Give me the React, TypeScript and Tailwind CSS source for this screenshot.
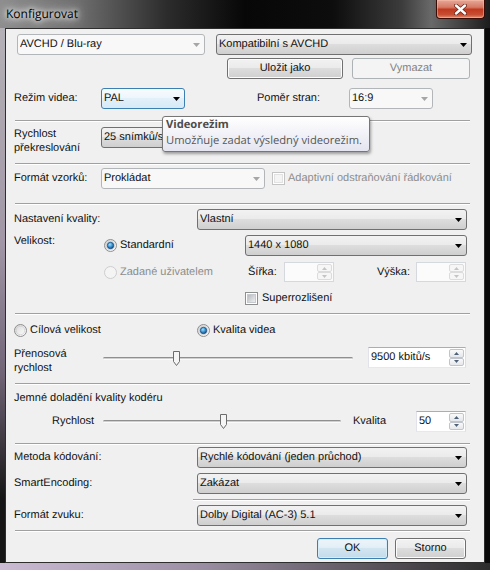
import type { ReactNode } from 'react'

type Kind = 'normal' | 'disabled' | 'focus'

const comboSkin: Record<Kind, string> = {
  normal: 'border-[#707070] bg-[linear-gradient(#f2f2f2_0%,#ebebeb_45%,#dddddd_50%,#cfcfcf_100%)]',
  disabled: 'border-[#b3b6b9] bg-[#f8f8f8]',
  focus: 'border-[#3c7fb1] bg-[linear-gradient(#f7fbfe_0%,#eef6fc_45%,#e2f0fa_50%,#d5eaf7_100%)]',
}

function Combo({ className = '', text, kind = 'normal' }: { className?: string; text: string; kind?: Kind }) {
  return (
    <div className={`flex h-[21px] shrink-0 items-center rounded-[3px] border pl-[2px] pr-[4px] ${comboSkin[kind]} ${className}`}>
      <span className="flex-1 truncate whitespace-nowrap">{text}</span>
      <svg width="7" height="4" viewBox="0 0 7 4" className="shrink-0">
        <path d="M0 0h7L3.5 4z" fill={kind === 'disabled' ? '#a6a6a6' : '#000'} />
      </svg>
    </div>
  )
}

function Button({ className = '', children, kind = 'normal' }: { className?: string; children: ReactNode; kind?: 'normal' | 'disabled' | 'default' }) {
  const skin =
    kind === 'disabled'
      ? 'border-[#adb2b5] bg-[#f4f4f4] text-[#838383]'
      : kind === 'default'
        ? 'border-[#3c7fb1] bg-[linear-gradient(#edf5fa_0%,#e2eef6_45%,#d2e5f0_50%,#c3dbea_100%)] shadow-[inset_0_0_0_1px_#d6ecf8]'
        : 'border-[#707070] bg-[linear-gradient(#f2f2f2_0%,#ebebeb_45%,#dddddd_50%,#cfcfcf_100%)] shadow-[inset_0_0_0_1px_#fcfcfc]'
  return (
    <div className={`flex h-[21px] shrink-0 items-center justify-center rounded-[3px] border ${skin} ${className}`}>
      {children}
    </div>
  )
}

function Sep({ className = '' }: { className?: string }) {
  return <div className={`h-[2px] shrink-0 border-t border-b border-t-[#a0a0a0] border-b-white ${className}`} />
}

function Radio({ checked = false, disabled = false }: { checked?: boolean; disabled?: boolean }) {
  return (
    <svg width="13" height="13" viewBox="0 0 13 13" className="shrink-0">
      <defs>
        <linearGradient id="rb-ring" x1="0" y1="0" x2="1" y2="1">
          <stop offset="0" stopColor="#d2d2d2" />
          <stop offset="1" stopColor="#ffffff" />
        </linearGradient>
        <linearGradient id="rb-in" x1="0" y1="0" x2="1" y2="1">
          <stop offset="0" stopColor="#dedede" />
          <stop offset="1" stopColor="#fafafa" />
        </linearGradient>
        <radialGradient id="rb-dot" cx="0.4" cy="0.35" r="0.7">
          <stop offset="0" stopColor="#a6e0fd" />
          <stop offset="0.5" stopColor="#3d98d6" />
          <stop offset="1" stopColor="#11457a" />
        </radialGradient>
      </defs>
      <circle cx="6.5" cy="6.5" r="6" fill={disabled ? '#f4f4f4' : 'url(#rb-ring)'} stroke={disabled ? '#cdcdcd' : '#8e8f8f'} />
      {!disabled && <circle cx="6.5" cy="6.5" r="4.2" fill="url(#rb-in)" stroke="#c9c9c9" strokeWidth="0.6" />}
      {checked && <circle cx="6.5" cy="6.5" r="3.2" fill="url(#rb-dot)" stroke="#164d84" strokeWidth="0.8" />}
    </svg>
  )
}

function Check({ disabled = false }: { disabled?: boolean }) {
  return (
    <svg width="13" height="13" viewBox="0 0 13 13" className="shrink-0">
      <defs>
        <linearGradient id="cb-in" x1="0" y1="0" x2="1" y2="1">
          <stop offset="0" stopColor="#b4b8be" />
          <stop offset="1" stopColor="#f1f1f1" />
        </linearGradient>
      </defs>
      <rect x="0.5" y="0.5" width="12" height="12" fill="#fff" stroke={disabled ? '#c4c4c4' : '#8e8f8f'} />
      <rect x="2.5" y="2.5" width="8" height="8" fill={disabled ? '#f4f4f4' : 'url(#cb-in)'} stroke={disabled ? '#e2e2e2' : '#c6c9ce'} />
    </svg>
  )
}

function SpinHalf({ up = false, disabled = false }: { up?: boolean; disabled?: boolean }) {
  return (
    <div
      className={`flex flex-1 items-center justify-center rounded-[2px] border ${
        disabled ? 'border-[#dcdcdc] bg-[#f6f6f6]' : 'border-[#c0c5cc] bg-[linear-gradient(#fafafa,#e5e7ea)]'
      }`}
    >
      <svg width="5" height="3" viewBox="0 0 5 3">
        <path d={up ? 'M0 3h5L2.5 0z' : 'M0 0h5L2.5 3z'} fill={disabled ? '#c4c4c4' : '#4f6178'} />
      </svg>
    </div>
  )
}

function Spin({ className = '', value = '', disabled = false }: { className?: string; value?: string; disabled?: boolean }) {
  return (
    <div
      className={`flex shrink-0 items-stretch border p-[1px] ${
        disabled ? 'border-[#d5d8dc] bg-[#fbfbfb]' : 'border-[#abadb3] border-b-[#e3e9ef] border-l-[#e2e3ea] border-r-[#dbdfe6] bg-white'
      } ${className}`}
    >
      <span className="flex-1 self-center pl-[1px]">{value}</span>
      <div className="flex w-[15px] flex-col">
        <SpinHalf up disabled={disabled} />
        <SpinHalf disabled={disabled} />
      </div>
    </div>
  )
}

function Slider({ className = '', thumb = '' }: { className?: string; thumb?: string }) {
  return (
    <div className={`relative h-[15px] shrink-0 ${className}`}>
      <div className="mx-[1px] mt-[6px] h-[3px] rounded-[2px] border-t border-b border-t-[#8f8f8f] border-b-[#fafafa] bg-[#cfcfcf]" />
      <svg width="7" height="15" viewBox="0 0 7 15" className={`absolute top-0 ${thumb}`}>
        <path d="M0.5 0.5H6.5V10.5L3.5 14.5L0.5 10.5Z" fill="#f5f5f5" stroke="#6c6c6c" />
      </svg>
    </div>
  )
}

function CloseButton() {
  return (
    <div className="ml-auto mr-[5px] flex h-[19px] w-[49px] items-center justify-center rounded-b-[4px] border border-t-0 border-[#3a0c06] bg-[linear-gradient(#e7a797_0%,#d57a66_40%,#c2391f_52%,#c84e33_82%,#e29071_100%)] shadow-[inset_0_0_0_1px_rgba(255,200,180,0.45)]">
      <svg width="13" height="11" viewBox="0 0 13 11">
        <path d="M2 1.5L11 9.5M11 1.5L2 9.5" stroke="#6b2519" strokeWidth="4" strokeLinecap="round" />
        <path d="M2 1.5L11 9.5M11 1.5L2 9.5" stroke="#ffffff" strokeWidth="2.4" strokeLinecap="round" />
      </svg>
    </div>
  )
}

export default function App() {
  return (
    <div className="flex h-[570px] w-[490px] flex-col overflow-hidden bg-[#0c0c0c] font-['Liberation_Sans',Arial,sans-serif] text-[11px] leading-[13px] text-[#111] antialiased [text-rendering:geometricPrecision]">
      {/* title bar */}
      <div className="flex h-[28px] shrink-0 items-start bg-[linear-gradient(90deg,#8e8e8e_0%,#6e6e6e_16%,#2c2c2c_34%,#070707_50%,#0d0d0d_68%,#3c3c3c_82%,#696969_88%,#1c1c1c_100%)]">
        <span className="ml-[6px] mt-[6px] font-['Open_Sans',sans-serif] text-[12px] leading-[16px] text-black [text-shadow:0_0_5px_#fff,0_0_9px_#fff,0_0_14px_#fff]">
          Konfigurovat
        </span>
        <CloseButton />
      </div>

      <div className="flex h-[535px] shrink-0">
        <div className="w-[5px] shrink-0 bg-[linear-gradient(#b4b1b6,#a197a6_40%,#6f6375_65%,#151515_88%)]" />

        {/* client area */}
        <div className="relative flex w-[480px] shrink-0 flex-col border border-[#2e2e2e] bg-[#f0f0f0]">
          <div className="mt-[5px] flex h-[21px]">
            <Combo className="ml-[11px] w-[188px]" text="AVCHD / Blu-ray" kind="disabled" />
            <Combo className="ml-[11px] w-[256px]" text="Kompatibilní s AVCHD" />
          </div>

          <div className="mt-[3px] flex h-[21px]">
            <Button className="ml-[221px] w-[116px]">Uložit jako</Button>
            <Button className="ml-[9px] w-[118px]" kind="disabled">
              Vymazat
            </Button>
          </div>

          <div className="mt-[9px] flex h-[21px] items-center">
            <span className="ml-[8px] w-[87px] shrink-0">Režim videa:</span>
            <Combo className="w-[84px]" text="PAL" kind="focus" />
            <span className="ml-[72px] w-[92px] shrink-0">Poměr stran:</span>
            <Combo className="w-[84px]" text="16:9" kind="disabled" />
          </div>

          <Sep className="ml-[9px] mt-[11px] w-[455px]" />

          <div className="mt-[5px] flex h-[28px] items-start">
            <span className="ml-[8px] w-[87px] shrink-0 leading-[14px]">
              Rychlost
              <br />
              překreslování
            </span>
            <Combo className="w-[84px]" text="25 snímků/s" />
          </div>

          <Sep className="ml-[9px] mt-[8px] w-[455px]" />

          <div className="mt-[3px] flex h-[21px] items-center">
            <span className="ml-[8px] w-[87px] shrink-0">Formát vzorků:</span>
            <Combo className="w-[164px]" text="Prokládat" kind="disabled" />
            <span className="ml-[7px] flex">
              <Check disabled />
            </span>
            <span className="ml-[3px] text-[#8d8d8d]">Adaptivní odstraňování řádkování</span>
          </div>

          <Sep className="ml-[9px] mt-[14px] w-[455px]" />

          <div className="mt-[4px] flex h-[21px] items-center">
            <span className="ml-[8px] w-[183px] shrink-0">Nastavení kvality:</span>
            <Combo className="w-[270px]" text="Vlastní" />
          </div>

          <div className="mt-[5px] flex h-[21px] items-center">
            <span className="ml-[8px] w-[90px] shrink-0 self-start">Velikost:</span>
            <div className="flex w-[141px] shrink-0 items-center">
              <Radio checked />
              <span className="ml-[3px]">Standardní</span>
            </div>
            <Combo className="w-[222px]" text="1440 x 1080" />
          </div>

          <div className="mt-[6px] flex h-[20px] items-center">
            <div className="ml-[98px] flex w-[141px] shrink-0 items-center">
              <Radio disabled />
              <span className="ml-[3px] text-[#8d8d8d]">Zadané uživatelem</span>
            </div>
            <span className="ml-[3px] w-[36px] shrink-0">Šířka:</span>
            <Spin className="h-[20px] w-[50px]" disabled />
            <span className="ml-[43px] w-[39px] shrink-0">Výška:</span>
            <Spin className="h-[20px] w-[50px]" disabled />
          </div>

          <div className="mt-[9px] flex h-[14px] items-center">
            <span className="ml-[239px] flex">
              <Check />
            </span>
            <span className="ml-[4px]">Superrozlišení</span>
          </div>

          <Sep className="ml-[9px] mt-[8px] w-[455px]" />

          <div className="mt-[8px] flex h-[14px] items-center">
            <div className="ml-[8px] flex w-[183px] shrink-0 items-center">
              <Radio />
              <span className="ml-[3px]">Cílová velikost</span>
            </div>
            <Radio checked />
            <span className="ml-[3px]">Kvalita videa</span>
          </div>

          <div className="mt-[10px] flex h-[28px] items-start">
            <span className="ml-[8px] w-[88px] shrink-0 leading-[14px]">
              Přenosová
              <br />
              rychlost
            </span>
            <Slider className="mt-[4px] w-[252px]" thumb="left-[71px]" />
            <Spin className="ml-[14px] h-[21px] w-[98px]" value="9500 kbitů/s" />
          </div>

          <Sep className="ml-[9px] mt-[8px] w-[455px]" />

          <div className="mt-[6px] flex h-[14px] items-center">
            <span className="ml-[8px]">Jemné doladění kvality kodéru</span>
          </div>

          <div className="mt-[6px] flex h-[21px] items-center">
            <span className="ml-[46px] w-[50px] shrink-0">Rychlost</span>
            <Slider className="w-[240px]" thumb="left-[118px]" />
            <span className="ml-[11px] w-[63px] shrink-0">Kvalita</span>
            <Spin className="h-[21px] w-[50px]" value="50" />
          </div>

          <Sep className="ml-[9px] mt-[11px] w-[455px]" />

          <div className="mt-[2px] flex h-[21px] items-center">
            <span className="ml-[8px] w-[183px] shrink-0">Metoda kódování:</span>
            <Combo className="w-[270px]" text="Rychlé kódování (jeden průchod)" />
          </div>

          <div className="mt-[5px] flex h-[21px] items-center">
            <span className="ml-[8px] w-[183px] shrink-0">SmartEncoding:</span>
            <Combo className="w-[270px]" text="Zakázat" />
          </div>

          <Sep className="ml-[187px] mt-[5px] w-[277px]" />

          <div className="mt-[4px] flex h-[21px] items-center">
            <span className="ml-[8px] w-[183px] shrink-0">Formát zvuku:</span>
            <Combo className="w-[270px]" text="Dolby Digital (AC-3) 5.1" />
          </div>

          <Sep className="ml-[9px] mt-[4px] w-[455px]" />

          <div className="mt-[6px] flex h-[21px]">
            <Button className="ml-[311px] w-[71px]" kind="default">
              OK
            </Button>
            <Button className="ml-[7px] w-[71px]">Storno</Button>
          </div>

          {/* tooltip over the frame-rate combo */}
          <div className="absolute left-[156px] top-[87px] h-[36px] w-[208px] rounded-[3px] border border-[#767676] bg-[linear-gradient(#ffffff,#e4e5f0)] pl-[3px] font-['Open_Sans',sans-serif] text-[11.2px] leading-[16px] text-[#575757] shadow-[1px_2px_3px_rgba(0,0,0,0.35)]">
            <div className="font-bold text-[#4c4c4c]">Videorežim</div>
            <div>Umožňuje zadat výsledný videorežim.</div>
          </div>
        </div>

        <div className="flex-1 bg-[#0a0a0a]" />
      </div>

      <div className="flex-1 bg-[linear-gradient(90deg,#cbbcd4,#9d90a5_40%,#2c2c2c)]" />
    </div>
  )
}
